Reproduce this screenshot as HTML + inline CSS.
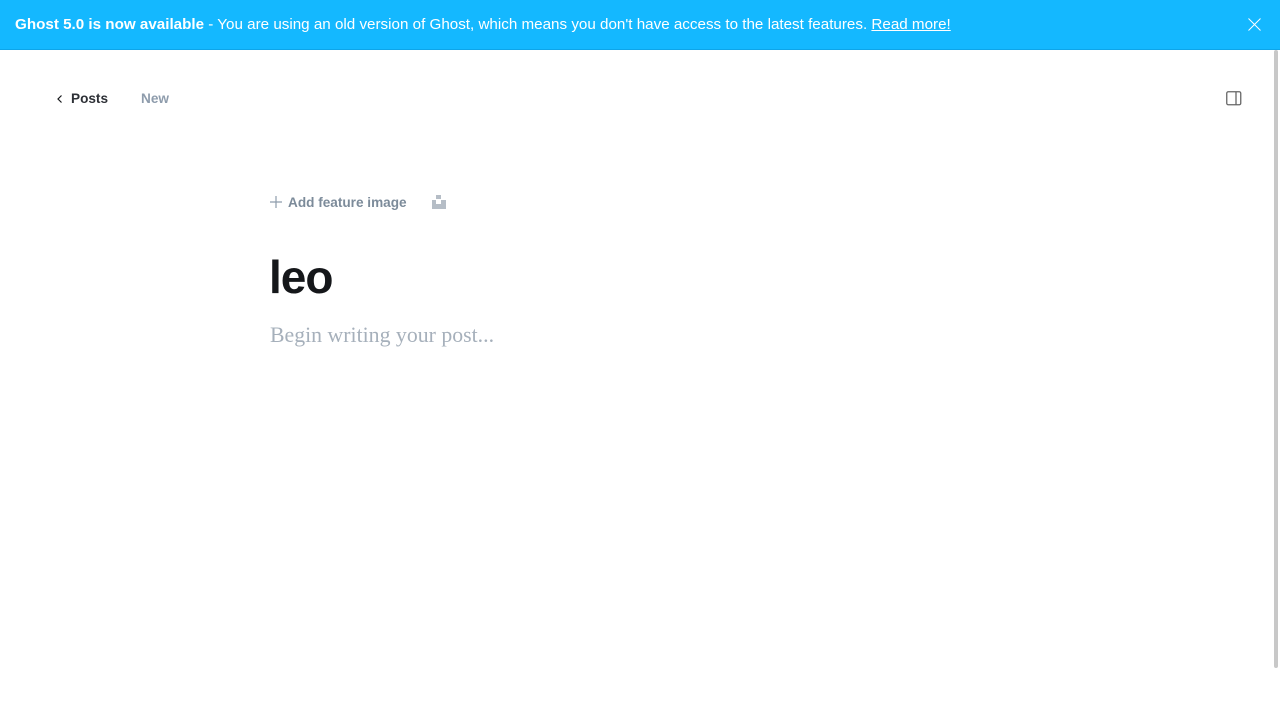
<!DOCTYPE html>
<html><head><meta charset="utf-8"><style>
body{margin:0;width:1280px;height:720px;overflow:hidden;background:#fff;font-family:"Liberation Sans",sans-serif;position:relative}
.banner{position:absolute;left:0;top:0;width:1280px;height:49px;background:#14b8ff;border-bottom:1px solid #0ea5e9;color:#fff;font-size:15.2px;line-height:50px}
.banner .t{position:absolute;left:15px;top:0;white-space:nowrap}
.banner u{text-decoration:underline}
.sb{position:absolute;right:2px;top:50px;width:4px;height:618px;background:#c8c8c8;border-radius:2px}
.posts{position:absolute;left:71px;top:91px;font-size:13.6px;font-weight:bold;color:#2d3036}
.new{position:absolute;left:141px;top:91px;font-size:13.6px;font-weight:bold;color:#8e9cac}
.afi{position:absolute;left:288px;top:195px;font-size:13.6px;font-weight:bold;color:#7c8b9a}
.title{position:absolute;left:269px;top:250px;font-size:46px;font-weight:bold;color:#15171a;letter-spacing:-1px}
.ph{position:absolute;left:270px;top:323px;font-family:"Liberation Serif",serif;font-size:21.8px;color:#a6b0bb}
</style></head><body>
<div class="banner"><span class="t"><b>Ghost 5.0 is now available</b> - You are using an old version of Ghost, which means you don't have access to the latest features. <u>Read more!</u></span>
<svg style="position:absolute;left:1248px;top:18px" width="13" height="13"><path d="M0.5 0.5L12.5 12.5M12.5 0.5L0.5 12.5" stroke="#fff" stroke-width="1"/></svg></div>
<div class="sb"></div>
<svg style="position:absolute;left:56px;top:94px" width="8" height="10"><path d="M5.5 1.5L2 5l3.5 3.5" fill="none" stroke="#15171a" stroke-width="1.2"/></svg>
<div class="posts">Posts</div><div class="new">New</div>
<svg style="position:absolute;left:1226px;top:91px" width="16" height="15"><rect x="0.75" y="0.75" width="14" height="13" rx="1.5" fill="none" stroke="#666" stroke-width="1.3"/><path d="M10 1v13" stroke="#666" stroke-width="1.3"/></svg>
<svg style="position:absolute;left:270px;top:196px" width="12" height="12"><path d="M6 0v12M0 6h12" stroke="#8e9cac" stroke-width="1.2"/></svg>
<div class="afi">Add feature image</div>
<svg style="position:absolute;left:432px;top:195px" width="14" height="14"><rect x="4" y="0" width="5" height="4" fill="#b5bdc6"/><path d="M0 5h4v4h5V5h5v9H0z" fill="#b5bdc6"/></svg>
<div class="title">leo</div>
<div class="ph">Begin writing your post...</div>
</body></html>
